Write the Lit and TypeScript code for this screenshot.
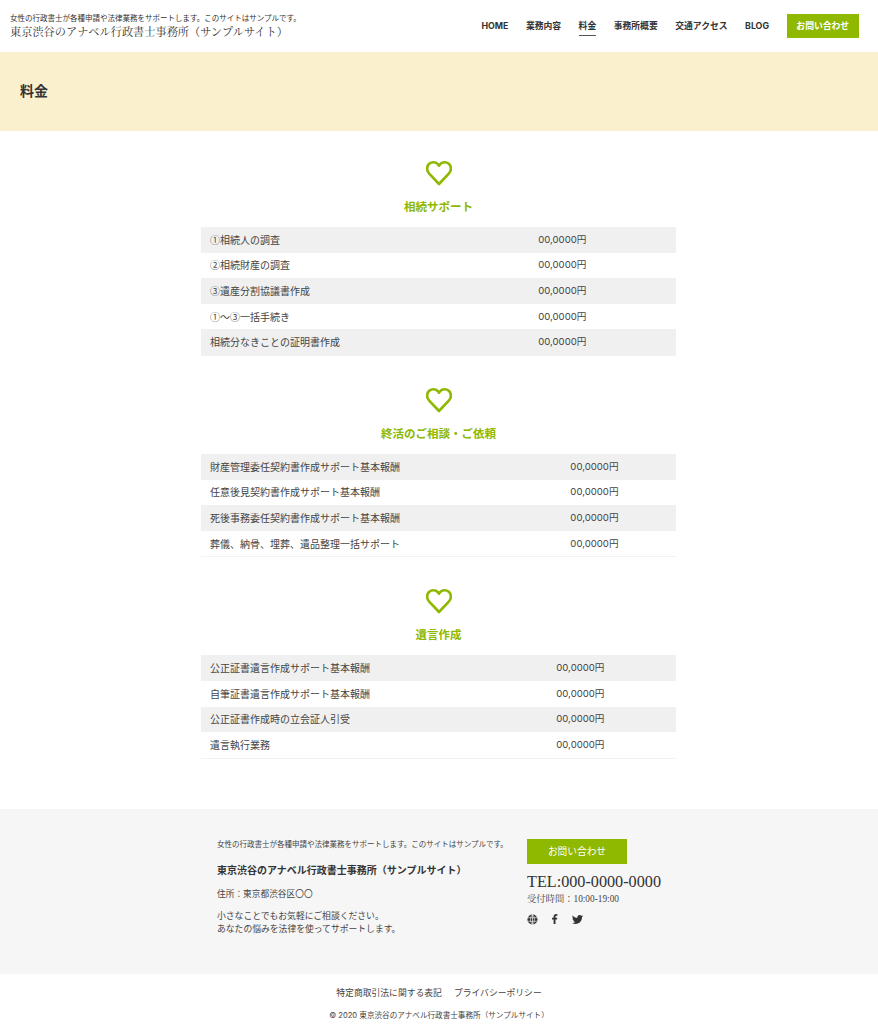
import { LitElement, html, css, svg } from "lit";
import { customElement } from "lit/decorators.js";

const sections = [
  { title: "相続サポート", rows: ["①相続人の調査", "②相続財産の調査", "③遺産分割協議書作成", "①〜③一括手続き", "相続分なきことの証明書作成"] },
  { title: "終活のご相談・ご依頼", rows: ["財産管理委任契約書作成サポート基本報酬", "任意後見契約書作成サポート基本報酬", "死後事務委任契約書作成サポート基本報酬", "葬儀、納骨、埋葬、遺品整理一括サポート"] },
  { title: "遺言作成", rows: ["公正証書遺言作成サポート基本報酬", "自筆証書遺言作成サポート基本報酬", "公正証書作成時の立会証人引受", "遺言執行業務"] },
];
const nav = ["HOME", "業務内容", "料金", "事務所概要", "交通アクセス", "BLOG"];

const heart = svg`<svg class="heart" viewBox="0 0 26 26" width="26" height="26"><path d="M13 24 3.2 13.6C.4 10.6.5 6.2 3.2 3.8 5.9 1.5 10 1.8 12.2 4.6L13 5.7l.8-1.100C16 1.800 20.100 1.500 22.800 3.800c2.700 2.400 2.800 6.800 0 9.800Z" fill="none" stroke="#8fb800" stroke-width="2.6" stroke-linejoin="round"/></svg>`;

@customElement("app-root")
export class AppRoot extends LitElement {
  static styles = css`
    :host { display: block; width: 878px; background: #fff; font-family: Inter, "Noto Sans CJK JP", sans-serif; color: #333; }
    header { height: 52px; display: flex; justify-content: space-between; align-items: center; padding: 0 19px 0 10px; box-sizing: border-box; }
    .tag { font-size: 7.5px; line-height: 12px; color: #333; font-family: "Noto Sans CJK JP", sans-serif; }
    .logo { font-family: "Liberation Serif", "Noto Serif CJK JP", "Noto Sans CJK JP", serif; font-size: 11.200px; line-height: 16px; color: #333; }
    nav { display: flex; align-items: center; gap: 17.5px; }
    nav a { font-size: 8.800px; font-weight: 700; color: #333; line-height: 12px; position: relative; }
    nav a.on::after { content: ""; position: absolute; left: 0; right: 0; bottom: -4px; height: 1.500px; background: #555; }
    nav a.btn { background: #8fb800; color: #fff; width: 72.500px; height: 24px; line-height: 24px; text-align: center; }
    .hero { height: 79px; background: #fbf0cd; padding: 0 20px 4px; display: flex; align-items: center; font-size: 14px; font-weight: 700; color: #333; box-sizing: border-box; }
    main { padding: 29px 1px 0 0; display: flex; flex-direction: column; align-items: center; }
    section { width: 475px; display: flex; flex-direction: column; align-items: center; margin-bottom: 31px; }
    .heart { display: block; }
    h2 { margin: 13px 0 12px; font-size: 11.500px; line-height: 16px; font-weight: 700; color: #8fb800; }
    table { width: 475px; border-collapse: collapse; border-bottom: 1px solid #f2f2f2; }
    td { padding: 0 9px; height: 25.600px; font-size: 10px; line-height: 14px; color: #444; white-space: nowrap; font-family: "Noto Sans CJK JP", sans-serif; }
    td.price { font-family: Inter, "Noto Sans CJK JP", sans-serif; font-size: 9.600px; }
    tr:nth-child(odd) td { background: #f0f0f0; }
    footer .box { background: #f6f6f6; height: 165px; margin-top: 19px; display: flex; padding: 30px 0 0 217px; box-sizing: border-box; }
    .left { width: 310px; }
    .ftag { font-size: 7.500px; line-height: 11px; color: #444; }
    .fname { font-size: 10px; font-weight: 700; line-height: 14px; margin-top: 13px; color: #333; }
    .addr { font-size: 8.700px; line-height: 13px; margin-top: 11px; color: #444; }
    .msg { font-size: 8.800px; line-height: 13px; margin-top: 8px; color: #444; }
    .btn2 { background: #8fb800; color: #fff; width: 100px; height: 25px; line-height: 25px; text-align: center; font-size: 9.700px; }
    .tel { font-family: "Liberation Serif", serif; font-size: 16.200px; line-height: 21px; margin-top: 8px; color: #333; }
    .hours { font-family: "Liberation Serif", "Noto Serif CJK JP", "Noto Sans CJK JP", serif; font-size: 9.300px; line-height: 13px; color: #444; }
    .icons { display: flex; gap: 13px; margin-top: 8px; align-items: center; }
    .links { display: flex; justify-content: center; gap: 12px; font-size: 8.800px; line-height: 12px; margin-top: 13px; color: #444; }
    .copy { text-align: center; font-size: 7.600px; line-height: 11px; margin-top: 11px; color: #444; padding-bottom: 8px; }
  `;

  render() {
    return html`
      <header>
        <div>
          <div class="tag">女性の行政書士が各種申請や法律業務をサポートします。このサイトはサンプルです。</div>
          <div class="logo">東京渋谷のアナベル行政書士事務所（サンプルサイト）</div>
        </div>
        <nav>
          ${nav.map((n) => html`<a class=${n === "料金" ? "on" : ""}>${n}</a>`)}
          <a class="btn">お問い合わせ</a>
        </nav>
      </header>
      <div class="hero">料金</div>
      <main>
        ${sections.map((s) => html`
          <section>
            ${heart}
            <h2>${s.title}</h2>
            <table>${s.rows.map((r) => html`<tr><td>${r}</td><td class="price">00,0000円</td></tr>`)}</table>
          </section>`)}
      </main>
      <footer>
        <div class="box">
          <div class="left">
            <div class="ftag">女性の行政書士が各種申請や法律業務をサポートします。このサイトはサンプルです。</div>
            <div class="fname">東京渋谷のアナベル行政書士事務所（サンプルサイト）</div>
            <div class="addr">住所：東京都渋谷区〇〇</div>
            <div class="msg">小さなことでもお気軽にご相談ください。<br />あなたの悩みを法律を使ってサポートします。</div>
          </div>
          <div>
            <div class="btn2">お問い合わせ</div>
            <div class="tel">TEL:000-0000-0000</div>
            <div class="hours">受付時間：10:00-19:00</div>
            <div class="icons">
              <svg width="11" height="11" viewBox="0 0 10 10"><circle cx="5" cy="5" r="4.600" fill="#333"/><path d="M.5 3.400h9M.5 6.600h9M5 .4v9.200M5 .4C2.600 3 2.600 7 5 9.600M5 .4C7.400 3 7.400 7 5 9.600" fill="none" stroke="#f6f6f6" stroke-width=".6"/></svg>
              <svg width="8" height="10" viewBox="1.500 0 8 10"><path d="M6 10V5.600h1.500l.3-1.800H6V2.700c0-.6.2-.9.9-.9h1V.2C7.600.1 7.100 0 6.600 0 5.100 0 4.100.9 4.100 2.500v1.300H2.500v1.800h1.600V10Z" fill="#333"/></svg>
              <svg width="11" height="9.200" viewBox="0 0 24 20"><path d="M24 2.400c-.9.400-1.800.7-2.800.8 1-.6 1.800-1.600 2.200-2.700-1 .6-2 1-3.100 1.200C19.300.7 18 0 16.600 0c-3.200 0-5.500 3-4.800 6C7.700 5.800 4.100 3.900 1.700.9.400 3.100 1 6 3.200 7.500c-.8 0-1.600-.2-2.200-.6-.1 2.300 1.600 4.500 4 5-.7.200-1.500.2-2.200.1.600 2 2.500 3.400 4.600 3.400-2 1.600-4.600 2.300-7.200 2 2.200 1.400 4.800 2.200 7.500 2.200 9.100 0 14.300-7.700 14-14.600 1-.7 1.800-1.600 2.300-2.600Z" fill="#333"/></svg>
            </div>
          </div>
        </div>
        <div class="links"><span>特定商取引法に関する表記</span><span>プライバシーポリシー</span></div>
        <div class="copy">© 2020 東京渋谷のアナベル行政書士事務所（サンプルサイト）</div>
      </footer>
    `;
  }
}
